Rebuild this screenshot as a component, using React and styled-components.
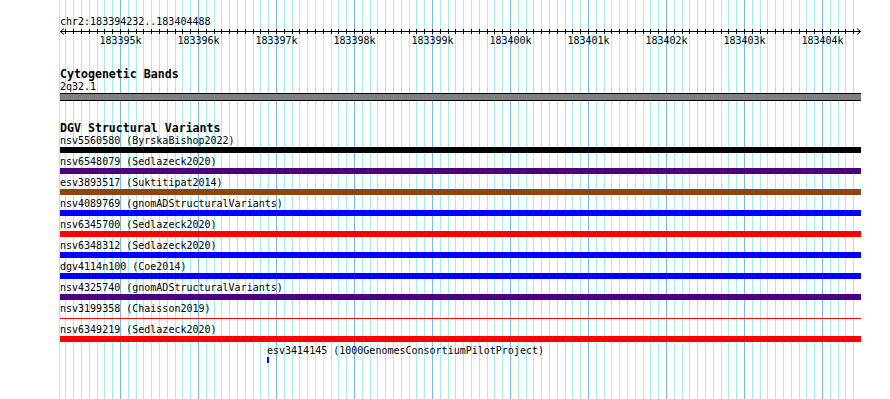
import React from "react";
import styled, { createGlobalStyle } from "styled-components";

const START = 183394232;
const END = 183404488;
const LEFT = 60;
const SPAN = 800;
const scale = SPAN / (END - START);
const toX = (bp) => LEFT + (bp - START) * scale;

const MONO = '"DejaVu Sans Mono", "Liberation Mono", monospace';

// tick / grid positions every 100bp
const ticks = [];
for (let p = Math.ceil(START / 100) * 100; p <= END; p += 100) {
  ticks.push({ x: Math.round(toX(p)) + 0.5, major: p % 1000 === 0, label: `${p / 1000}k` });
}

const features = [
  { name: "nsv5560580", source: "ByrskaBishop2022", color: "#000000" },
  { name: "nsv6548079", source: "Sedlazeck2020", color: "#4b0082" },
  { name: "esv3893517", source: "Suktitipat2014", color: "#8b4513" },
  { name: "nsv4089769", source: "gnomADStructuralVariants", color: "#0000ff" },
  { name: "nsv6345700", source: "Sedlazeck2020", color: "#ff0000" },
  { name: "nsv6348312", source: "Sedlazeck2020", color: "#0000ff" },
  { name: "dgv4114n100", source: "Coe2014", color: "#0000ff" },
  { name: "nsv4325740", source: "gnomADStructuralVariants", color: "#4b0082" },
  { name: "nsv3199358", source: "Chaisson2019", color: "#ff0000", thin: true },
  { name: "nsv6349219", source: "Sedlazeck2020", color: "#ff0000" },
  {
    name: "esv3414145",
    source: "1000GenomesConsortiumPilotProject",
    color: "#0000ff",
    start: 183396886,
    end: 183396912
  }
];

const GlobalStyle = createGlobalStyle`
  html, body {
    margin: 0;
    padding: 0;
    background: #ffffff;
  }
`;

const Page = styled.div`
  position: relative;
  width: 890px;
  height: 399px;
  overflow: hidden;
  background: #ffffff;
  font-family: ${MONO};
  color: #000000;
`;

const GridLayer = styled.svg`
  position: absolute;
  top: 0;
  left: 0;
  z-index: 0;
`;

const Panel = styled.div`
  position: relative;
  z-index: 1;
  display: flex;
  flex-direction: column;
  padding-left: ${LEFT}px;
`;

const PositionLabel = styled.div`
  padding-top: 16px;
  font-size: 10px;
  line-height: 12px;
  height: 12px;
`;

const RulerSvg = styled.svg`
  display: block;
  margin-left: -${LEFT}px;
  overflow: visible;
`;

const TrackTitle = styled.div`
  margin-top: ${(p) => p.$gap}px;
  font-size: 11.6px;
  font-weight: bold;
  line-height: 13px;
  height: 13px;
  white-space: pre;
`;

const BandLabel = styled.div`
  font-size: 10px;
  line-height: 12px;
  height: 12px;
`;

const Band = styled.div`
  box-sizing: border-box;
  width: 801px;
  height: 8px;
  background: #808080;
  border-top: 1px solid #000000;
  border-bottom: 1px solid #000000;
`;

const FeatureRow = styled.div`
  display: flex;
  flex-direction: column;
  height: 21px;
`;

const FeatureLabel = styled.div`
  font-size: 10px;
  line-height: 12px;
  height: 12px;
  white-space: pre;
`;

const Lane = styled.div`
  display: flex;
  align-items: center;
  width: 801px;
  height: 6px;
`;

const Bar = styled.div`
  height: ${(p) => (p.$thin ? 1 : 6)}px;
  background: ${(p) => p.$color};
  flex: none;
`;

const Grid = () => (
  <GridLayer width="890" height="399">
    <line x1="59.5" y1="0" x2="59.5" y2="399" stroke="#a4ecf0" strokeWidth="1" />
    {ticks.map((t) => (
      <line
        key={t.x}
        x1={t.x}
        y1="0"
        x2={t.x}
        y2="399"
        stroke={t.major ? "#72baf0" : "#a4ecf0"}
        strokeWidth="1"
      />
    ))}
  </GridLayer>
);

const Ruler = () => (
  <RulerSvg width="890" height="20">
    <line x1={LEFT} y1="3.5" x2={LEFT + SPAN + 1} y2="3.5" stroke="#000" strokeWidth="1" />
    <polyline points={`${LEFT + 4},0.5 ${LEFT + 0.5},3.5 ${LEFT + 4},6.5`} fill="none" stroke="#000" />
    <polyline
      points={`${LEFT + SPAN - 3},0.5 ${LEFT + SPAN + 0.5},3.5 ${LEFT + SPAN - 3},6.5`}
      fill="none"
      stroke="#000"
    />
    {ticks.map((t) => (
      <line key={t.x} x1={t.x} y1="1" x2={t.x} y2="6" stroke="#000" strokeWidth="1" />
    ))}
    {ticks
      .filter((t) => t.major)
      .map((t) => (
        <text
          key={t.label}
          x={t.x}
          y="16"
          textAnchor="middle"
          fontSize="10"
          fontFamily={MONO}
          fill="#000"
        >
          {t.label}
        </text>
      ))}
  </RulerSvg>
);

const Feature = ({ feature }) => {
  const x0 = feature.start ? Math.round(toX(feature.start)) : LEFT;
  const x1 = feature.end ? Math.round(toX(feature.end)) : LEFT + SPAN + 1;
  const offset = x0 - LEFT;
  return (
    <FeatureRow>
      <FeatureLabel style={{ paddingLeft: offset }}>
        {feature.name} ({feature.source})
      </FeatureLabel>
      <Lane>
        <Bar
          $color={feature.color}
          $thin={feature.thin}
          style={{ marginLeft: offset, width: Math.max(2, x1 - x0) }}
        />
      </Lane>
    </FeatureRow>
  );
};

const App = () => {
  return (
    <Page>
      <GlobalStyle />
      <Grid />
      <Panel>
        <PositionLabel>chr2:183394232..183404488</PositionLabel>
        <Ruler />
        <TrackTitle $gap={20}>Cytogenetic Bands</TrackTitle>
        <BandLabel>2q32.1</BandLabel>
        <Band />
        <TrackTitle $gap={21}>DGV Structural Variants</TrackTitle>
        {features.map((f) => (
          <Feature key={f.name} feature={f} />
        ))}
      </Panel>
    </Page>
  );
};

export default App;
